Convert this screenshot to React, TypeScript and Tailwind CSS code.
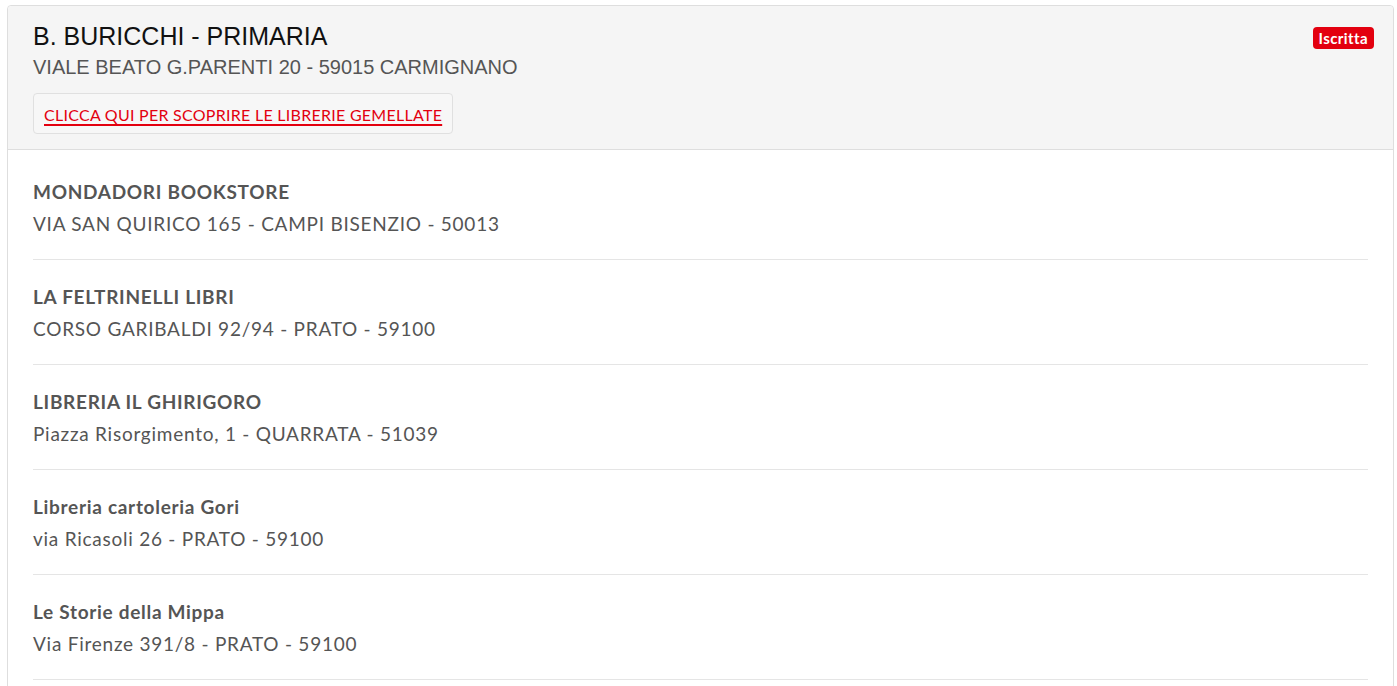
import React from "react";

const items = [
  { name: "MONDADORI BOOKSTORE", addr: "VIA SAN QUIRICO 165 - CAMPI BISENZIO - 50013" },
  { name: "LA FELTRINELLI LIBRI", addr: "CORSO GARIBALDI 92/94 - PRATO - 59100" },
  { name: "LIBRERIA IL GHIRIGORO", addr: "Piazza Risorgimento, 1 - QUARRATA - 51039" },
  { name: "Libreria cartoleria Gori", addr: "via Ricasoli 26 - PRATO - 59100" },
  { name: "Le Storie della Mippa", addr: "Via Firenze 391/8 - PRATO - 59100" },
];

export default function App() {
  return (
    <div className="bg-white pt-[5px] pl-[7px] pr-[3px] overflow-hidden h-[686px]">
      <div className="border border-[#dedede] rounded-[4px] bg-white">
        <div className="bg-[#f5f5f5] border-b border-[#dedede] pl-[25px] pr-[19px] pt-[14px] pb-[15px] flex justify-between items-start rounded-t-[4px]">
          <div className="flex flex-col items-start">
            <div className="text-[25px] leading-[32px] text-[#111] font-['Liberation_Sans',Arial,sans-serif]">
              B. BURICCHI - PRIMARIA
            </div>
            <div className="text-[20px] leading-[28px] text-[#555] font-['Liberation_Sans',Arial,sans-serif] mt-[1px]">
              VIALE BEATO G.PARENTI 20 - 59015 CARMIGNANO
            </div>
            <div className="mt-[12px] flex border border-[#e0e0e0] rounded-[4px] bg-[#f7f7f7] px-[10px] pt-[11px] pb-[9px]">
              <a className="block text-[16px] leading-[19px] tracking-[0.27px] text-[#e3000f] underline underline-offset-[3px] decoration-[2px] font-['Lato',sans-serif]">
                CLICCA QUI PER SCOPRIRE LE LIBRERIE GEMELLATE
              </a>
            </div>
          </div>
          <div className="mt-[7px] bg-[#e3000f] text-white text-[15px] leading-[22px] tracking-[0.4px] font-bold rounded-[4px] px-[6px] font-['Lato',sans-serif]">
            Iscritta
          </div>
        </div>
        <div className="px-[25px] pt-[5px] pb-[40px] font-['Lato',sans-serif]">
          {items.map((it) => (
            <div key={it.name} className="border-b border-[#e5e5e5] pt-[23px] pb-[22px]">
              <div className="text-[19px] leading-[27px] tracking-[0.7px] font-bold text-[#555]">{it.name}</div>
              <div className="text-[19px] leading-[27px] tracking-[0.75px] text-[#555] mt-[5px]">{it.addr}</div>
            </div>
          ))}
        </div>
      </div>
    </div>
  );
}
